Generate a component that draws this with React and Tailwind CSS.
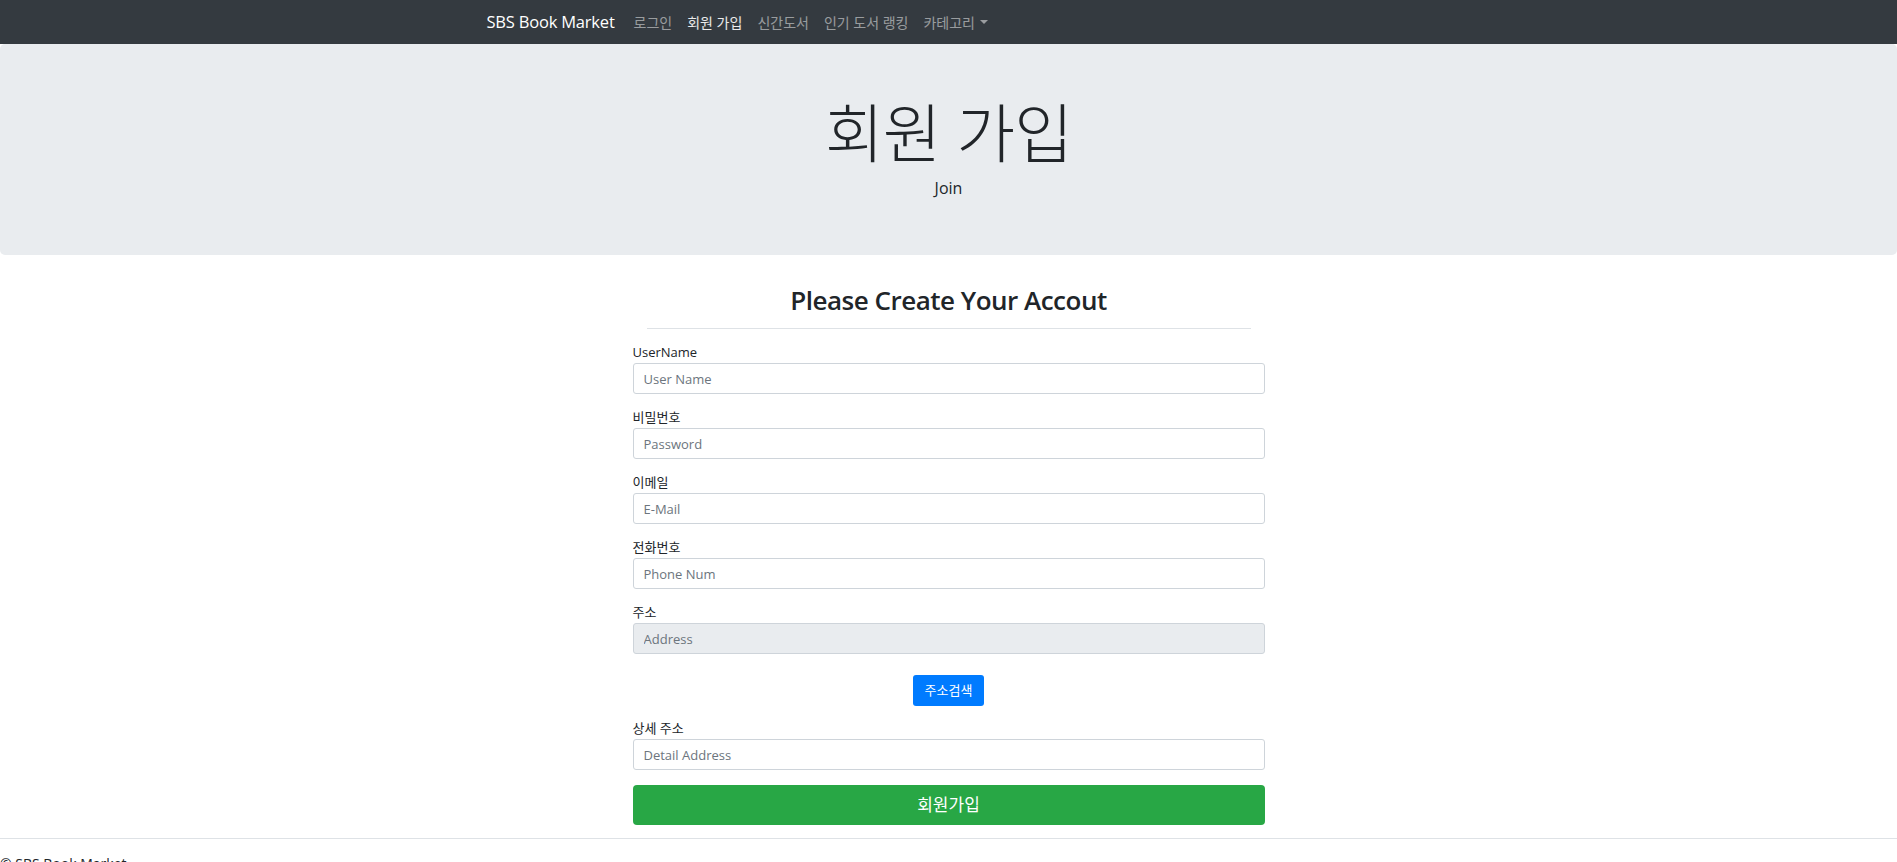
import React from 'react';

const KR = { fontFamily: '"Open Sans", "Noto Sans CJK KR", sans-serif' };

export default function App() {
    const fields = [
        { label: 'UserName', placeholder: 'User Name' },
        { label: '비밀번호', placeholder: 'Password' },
        { label: '이메일', placeholder: 'E-Mail' },
        { label: '전화번호', placeholder: 'Phone Num' },
        { label: '주소', placeholder: 'Address', readOnly: true },
    ];

    return (
        <div className="min-h-screen bg-white text-[#212529]" style={KR}>
            {/* navbar */}
            <nav className="h-[44px] bg-[#343a40]">
                <div className="w-[924px] mx-auto h-full flex items-center">
                    <span className="text-[16.5px] text-white mr-[19px] tracking-[-0.2px]">SBS Book Market</span>
                    <ul className="flex items-center gap-[15px] text-[14px] text-white/50">
                        <li>로그인</li>
                        <li className="text-white/90">회원 가입</li>
                        <li>신간도서</li>
                        <li>인기 도서 랭킹</li>
                        <li className="flex items-center">
                            카테고리
                            <span className="ml-[5px] w-0 h-0 border-l-[4px] border-r-[4px] border-t-[4px] border-l-transparent border-r-transparent border-t-white/50"></span>
                        </li>
                    </ul>
                </div>
            </nav>

            {/* jumbotron */}
            <div className="h-[211px] bg-[#e9ecef] rounded-[5px] flex flex-col items-center pt-[51px]">
                <h1 className="text-[64px] leading-[1.2] font-light tracking-[-1px]">회원 가입</h1>
                <p className="mt-[4px] text-[16px] leading-[24px]">Join</p>
            </div>

            {/* form */}
            <div className="w-[632px] mx-auto">
                <h3 className="mt-[28px] text-center text-[26px] leading-[34px] font-semibold tracking-[-0.5px]">Please Create Your Accout</h3>
                <hr className="mt-[11px] mx-[14px] border-0 border-t border-[#dee2e6]" />

                <form className="mt-[13px]">
                    {fields.map((f, i) => (
                        <div key={f.label} className={i === 0 ? '' : 'mt-[13px]'}>
                            <label className="block h-[21px] text-[13px] leading-[21px] font-normal">{f.label}</label>
                            <input
                                type="text"
                                placeholder={f.placeholder}
                                readOnly={f.readOnly}
                                className={`block w-full h-[31px] px-[10px] text-[13px] border border-[#ced4da] rounded-[3px] outline-none placeholder-[#6c757d] ${f.readOnly ? 'bg-[#e9ecef]' : 'bg-white'}`}
                            />
                        </div>
                    ))}

                    <div className="mt-[21px] flex justify-center">
                        <button type="button" className="h-[31px] px-[12px] bg-[#007bff] text-white text-[13px] rounded-[3px]">주소검색</button>
                    </div>

                    <div className="mt-[12px]">
                        <label className="block h-[21px] text-[13px] leading-[21px] font-normal">상세 주소</label>
                        <input
                            type="text"
                            placeholder="Detail Address"
                            className="block w-full h-[31px] px-[10px] text-[13px] border border-[#ced4da] rounded-[3px] outline-none placeholder-[#6c757d] bg-white"
                        />
                    </div>

                    <button type="submit" className="mt-[15px] w-full h-[40px] bg-[#28a745] text-white text-[17px] rounded-[4px]">회원가입</button>
                </form>
            </div>

            {/* footer */}
            <footer className="mt-[13px]">
                <hr className="border-0 border-t border-[#dee2e6]" />
                <p className="mt-[14px] text-[14px] leading-[21px]">© SBS Book Market</p>
            </footer>
        </div>
    );
}
